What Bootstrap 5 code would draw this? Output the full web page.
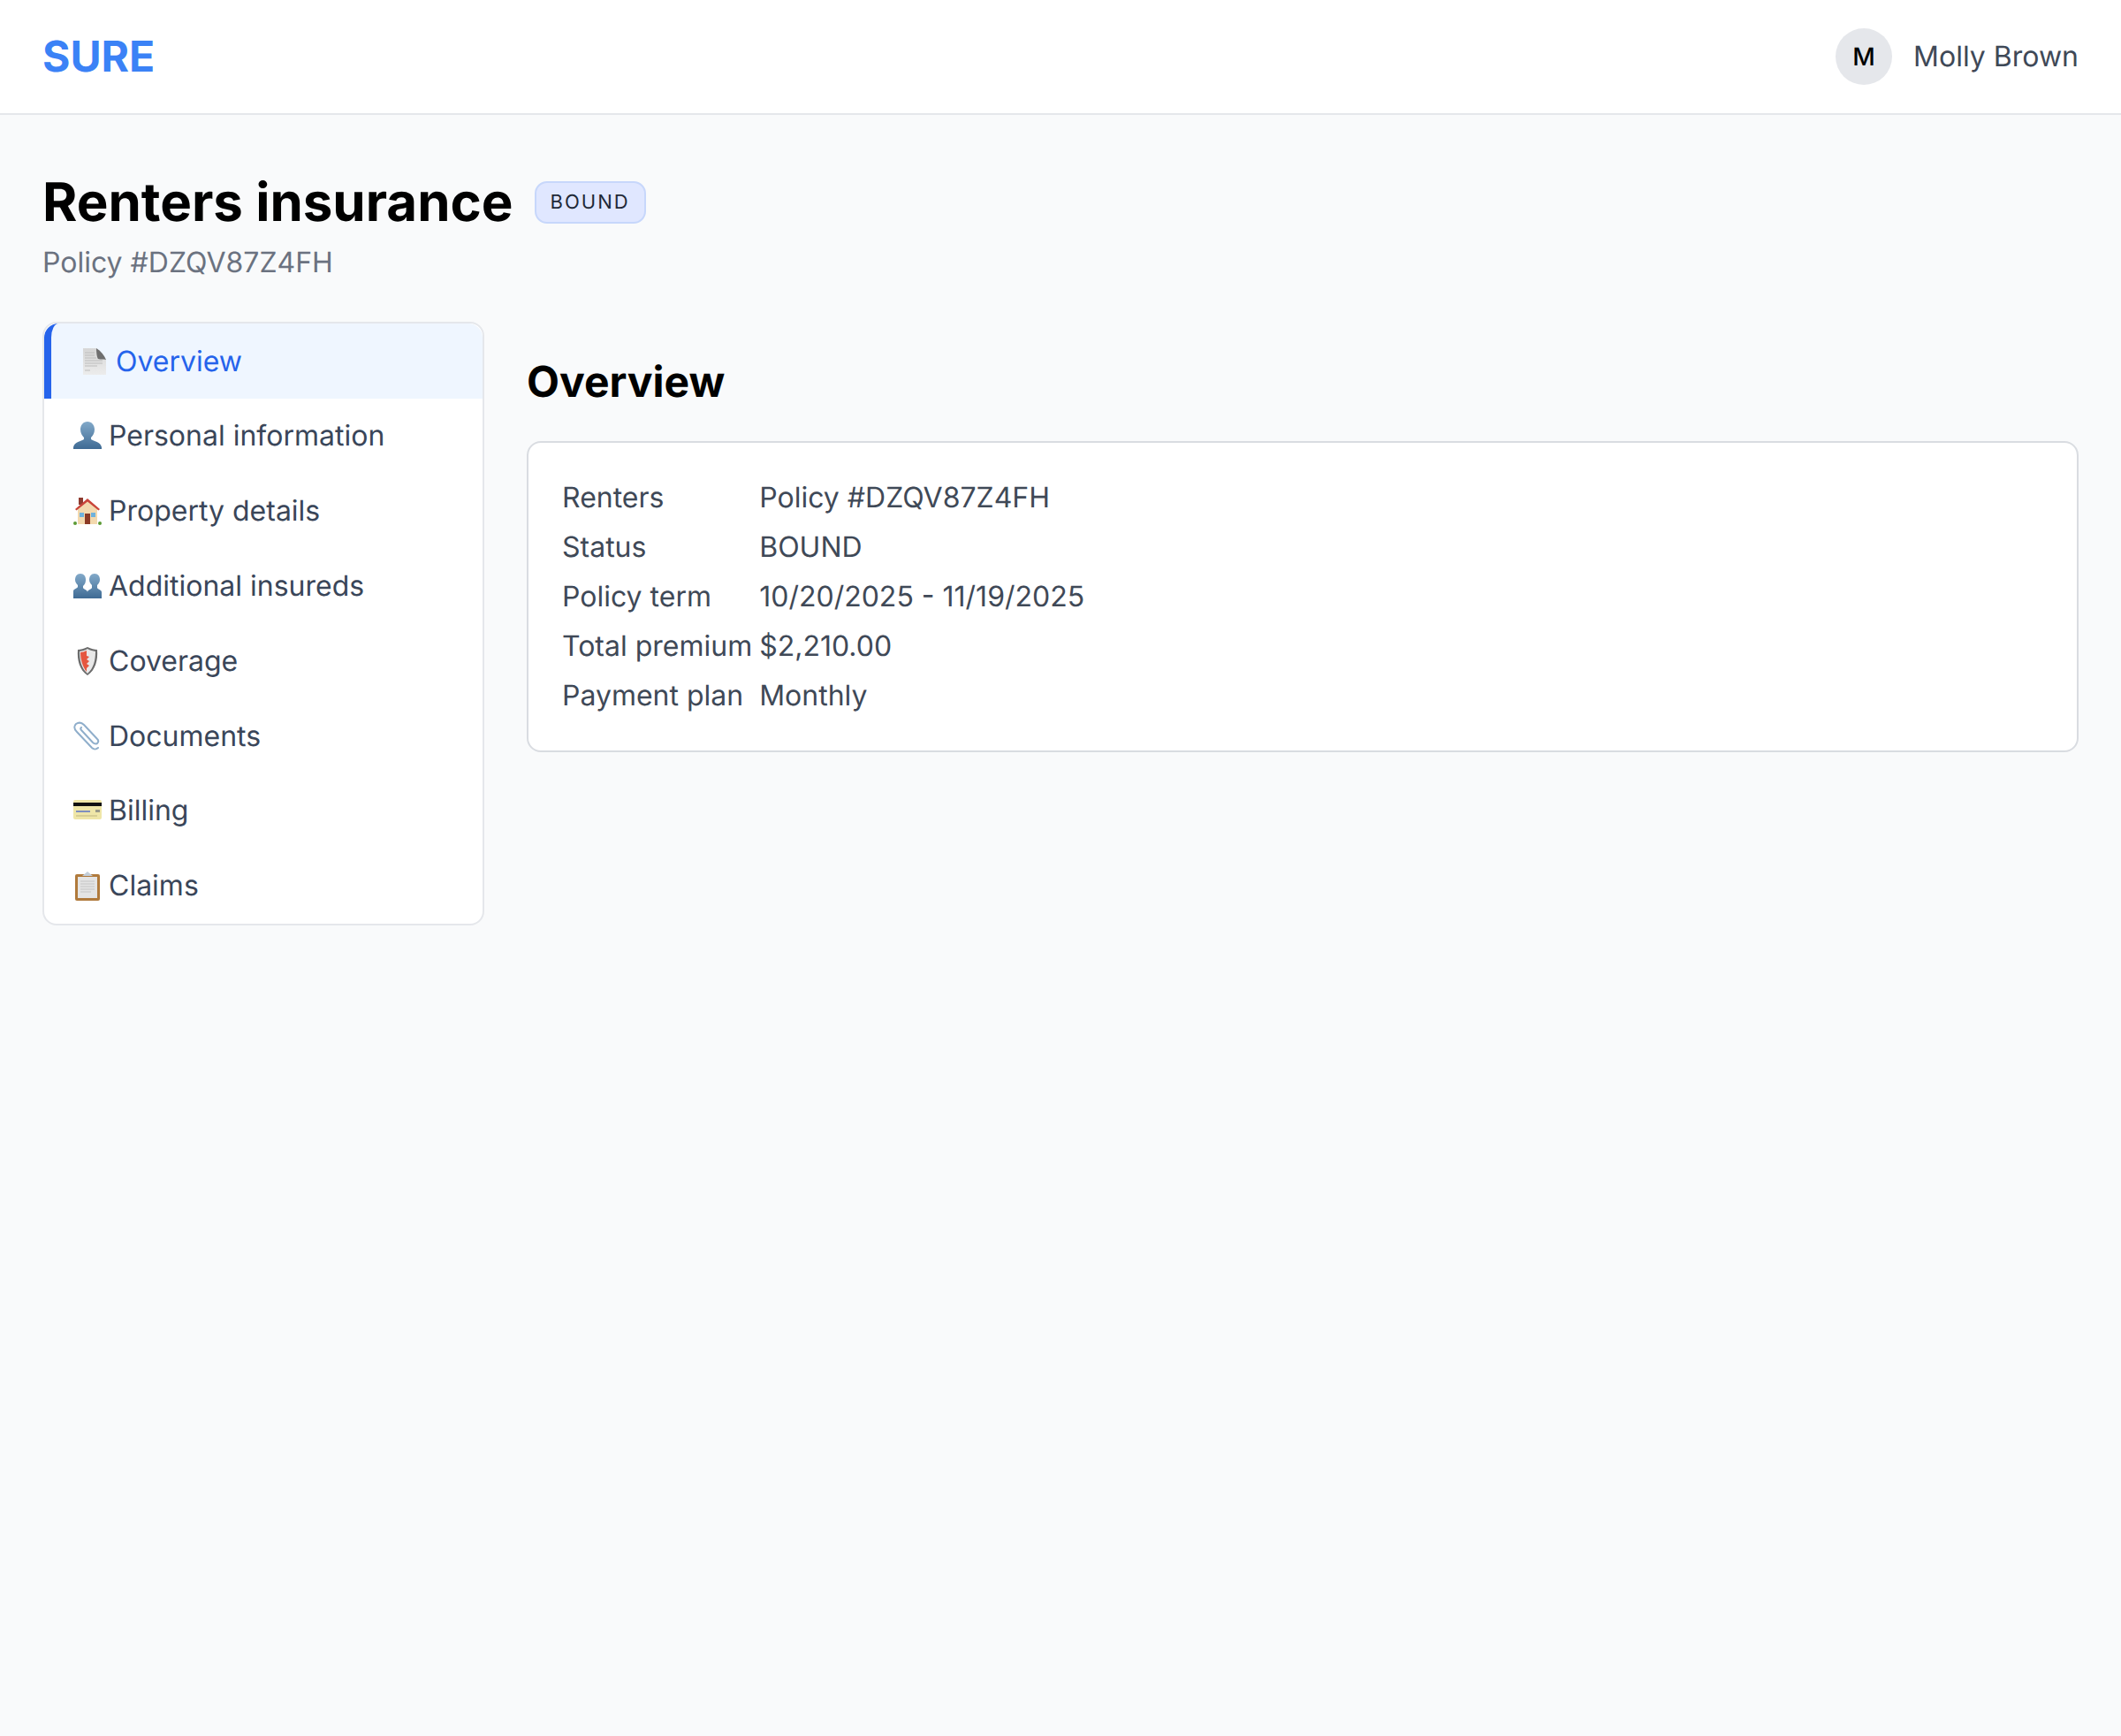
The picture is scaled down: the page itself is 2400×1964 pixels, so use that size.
<!DOCTYPE html>
<html lang="en">
<head>
    <meta charset="UTF-8">
    <title>Renters insurance</title>
    <link href="https://cdn.jsdelivr.net/npm/bootstrap@5.3.0/dist/css/bootstrap.min.css" rel="stylesheet">
    <style>
        body {
            background-color: #f9fafb;
            font-family: Inter, "Liberation Sans", sans-serif;
            font-size: 32px;
            min-height: 100vh;
            text-rendering: geometricPrecision;
        }
        .top-bar {
            height: 130px;
            padding: 0 48px;
            background-color: #fff;
            border-bottom: 2px solid #e5e7eb;
        }
        .brand-name {
            font-size: 48px;
            font-weight: 700;
            color: #3b82f6;
        }
        .avatar-circle {
            width: 64px;
            height: 64px;
            background-color: #e5e7eb;
            color: #000;
            font-size: 28px;
            font-weight: 500;
        }
        .user-name {
            color: #3f4957;
            font-size: 32px;
        }
        .page-body {
            padding: 63px 48px;
        }
        .page-title {
            font-size: 60px;
            font-weight: 700;
            line-height: 72px;
            color: #000;
            margin: 0;
        }
        .status-pill {
            font-size: 22px;
            letter-spacing: 2px;
            color: #1f2937;
            background-color: #e0e7ff;
            border: 2px solid #c7d7fb;
            border-radius: 14px;
            padding: 8px 16px;
            line-height: 28px;
        }
        .policy-sub {
            color: #6b7280;
            font-size: 32px;
            line-height: 48px;
            margin-top: 8px;
        }
        .content-row {
            margin-top: 43px;
        }
        .side-col {
            width: 500px;
            flex-shrink: 0;
        }
        .side-menu {
            --bs-list-group-border-radius: 16px;
            border: 2px solid #e5e7eb;
            border-radius: 16px;
            overflow: hidden;
            background-color: #fff;
        }
        .side-menu .list-group-item {
            display: flex;
            align-items: center;
            gap: 7px;
            height: 84.8px;
            padding: 0 0 0 32px;
            border: 0;
            color: #3a4659;
            font-size: 32px;
            background: transparent;
        }
        .side-menu .list-group-item.active {
            height: 85px;
            border-left: 8px solid #2563eb;
            background-color: #eff6ff;
            color: #2563eb;
            margin: 0;
        }
        .menu-icon {
            width: 34px;
            height: 34px;
            flex-shrink: 0;
        }
        .section-title {
            font-size: 48px;
            font-weight: 700;
            line-height: 58px;
            color: #000;
            margin: 39px 0 38px;
        }
        .info-panel {
            background-color: #fff;
            border: 2px solid #d9dce1;
            border-radius: 16px;
            padding: 34px 38px;
        }
        .info-grid {
            display: grid;
            grid-template-columns: auto 1fr;
            column-gap: 8px;
            color: #3f4957;
            font-size: 32px;
            line-height: 56px;
        }
    </style>
</head>
<body>
    <header class="top-bar d-flex align-items-center justify-content-between">
        <div class="brand-name">SURE</div>
        <div class="d-flex align-items-center gap-4">
            <div class="avatar-circle rounded-circle d-flex align-items-center justify-content-center">M</div>
            <div class="user-name">Molly Brown</div>
        </div>
    </header>

    <main class="page-body">
        <div class="d-flex align-items-center gap-4">
            <h1 class="page-title">Renters insurance</h1>
            <span class="status-pill">BOUND</span>
        </div>
        <div class="policy-sub">Policy #DZQV87Z4FH</div>

        <div class="d-flex gap-5 content-row">
            <div class="side-col">
                <div class="list-group side-menu">
                    <a class="list-group-item active" href="#">
                        <svg class="menu-icon" viewBox="0 0 34 34"><defs><linearGradient id="pg" x1="0" x2="0" y1="0" y2="1"><stop offset="0" stop-color="#d6d6d6"/><stop offset="1" stop-color="#ececec"/></linearGradient></defs><path d="M4 2h15l11 13v17H4z" fill="url(#pg)"/><path d="M19 2c0 6 1 11 2 12 3 1 6 0 9 1-2-5-6-10-11-13z" fill="#6f6f6f"/><path d="M6 7h11M6 10h11M6 13h13M6 16h20M6 19h20M6 22h14M6 27h6" stroke="#bdbdbd" stroke-width="1"/></svg>
                        Overview
                    </a>
                    <a class="list-group-item" href="#">
                        <svg class="menu-icon" viewBox="0 0 34 34"><defs><linearGradient id="bu" x1="0" x2="0" y1="0" y2="1"><stop offset="0" stop-color="#82a9c9"/><stop offset="1" stop-color="#3f6b94"/></linearGradient></defs><path d="M17 1c5 0 8 4 8 9 0 4-2 7-4 9v2c3 2 11 3 12 9v2H1v-2c1-6 9-7 12-9v-2c-2-2-4-5-4-9 0-5 3-9 8-9z" fill="url(#bu)"/></svg>
                        Personal information
                    </a>
                    <a class="list-group-item" href="#">
                        <svg class="menu-icon" viewBox="0 0 34 34"><rect x="7" y="2" width="5" height="8" fill="#8e3b2f"/><path d="M6 14 17 5l11 9v18H6z" fill="#f3d9ae"/><path d="M3 15 17 3l14 12-1.500 1.500L17 6.500 4.500 16.500z" fill="#c9453a"/><rect x="14" y="20" width="6" height="12" fill="#8b3a25"/><rect x="8" y="19" width="5" height="5" fill="#6fb2dc"/><rect x="21" y="19" width="5" height="5" fill="#6fb2dc"/><circle cx="3" cy="31" r="2" fill="#5c9a35"/><circle cx="31" cy="31" r="2" fill="#5c9a35"/></svg>
                        Property details
                    </a>
                    <a class="list-group-item" href="#">
                        <svg class="menu-icon" viewBox="0 0 34 34"><defs><linearGradient id="bv" x1="0" x2="0" y1="0" y2="1"><stop offset="0" stop-color="#82a9c9"/><stop offset="1" stop-color="#3f6b94"/></linearGradient></defs><path d="M9 3c4 0 6 3 6 7 0 3-1 5-3 7v2c1 2 5 2 5 5v7H1v-8c0-3 4-3 5-5v-2c-2-2-3-4-3-6 0-4 2-7 6-7z" fill="url(#bv)"/><path d="M25 3c4 0 6 3 6 7 0 2-1 4-3 6v3c1 2 5 2 5 5v7H17v-7c0-3 4-3 5-5v-3c-2-2-3-4-3-6 0-4 2-7 6-7z" fill="url(#bv)"/></svg>
                        Additional insureds
                    </a>
                    <a class="list-group-item" href="#">
                        <svg class="menu-icon" viewBox="0 0 34 34"><path d="M17 1c4 2 8 3 11 3 1 12-2 23-11 29C8 27 5 16 6 4c3 0 7-1 11-3z" fill="#6b6b6b"/><path d="M17 3c3 2 6 2 9 3 0 10-2 19-9 25C10 25 8 16 8 6c3-1 6-1 9-3z" fill="#e8e8e8"/><path d="M9 7c2 0 5-1 7-2v6l3 1-3 3 3 2-3 3 3 2-3 3v4c-4-5-7-13-7-22z" fill="#e5563f"/></svg>
                        Coverage
                    </a>
                    <a class="list-group-item" href="#">
                        <svg class="menu-icon" viewBox="0 0 34 34"><path d="M29 30c-2 2-5 2-7 0L5 12c-4-4-3-7-1-9 3-2 6-2 9 1l15 16c2 2 1 4 0 5-2 1-3 1-5-1L10 10c-1-1-1-2 0-3" fill="none" stroke="#8faecb" stroke-width="2" stroke-linecap="round"/></svg>
                        Documents
                    </a>
                    <a class="list-group-item" href="#">
                        <svg class="menu-icon" viewBox="0 0 34 34"><rect x="1" y="5" width="32" height="22" rx="2" fill="#efe6a8"/><rect x="1" y="8" width="32" height="4" fill="#111"/><path d="M4 18h16" stroke="#7f8fbf" stroke-width="2"/><rect x="26" y="16" width="5" height="3" fill="#9a9a8a"/><path d="M4 23h24" stroke="#cfc68f" stroke-width="1.5"/></svg>
                        Billing
                    </a>
                    <a class="list-group-item" href="#">
                        <svg class="menu-icon" viewBox="0 0 34 34"><rect x="3" y="4" width="28" height="30" rx="2" fill="#b07a3c"/><rect x="6" y="7" width="22" height="24" fill="#e4e4e4"/><path d="M9 12h16M9 15h16M9 18h16M9 21h16M9 24h12" stroke="#c4c4c4" stroke-width="1.2"/><path d="M11 6 17 1l6 5z" fill="#c3ced9"/></svg>
                        Claims
                    </a>
                </div>
            </div>
            <section class="flex-grow-1">
                <h2 class="section-title">Overview</h2>
                <div class="info-panel">
                    <div class="info-grid">
                        <div>Renters</div><div>Policy #DZQV87Z4FH</div>
                        <div>Status</div><div>BOUND</div>
                        <div>Policy term</div><div>10/20/2025 - 11/19/2025</div>
                        <div>Total premium</div><div>$2,210.00</div>
                        <div>Payment plan</div><div>Monthly</div>
                    </div>
                </div>
            </section>
        </div>
    </main>
    <script src="https://cdn.jsdelivr.net/npm/bootstrap@5.3.0/dist/js/bootstrap.bundle.min.js"></script>
</body>
</html>
